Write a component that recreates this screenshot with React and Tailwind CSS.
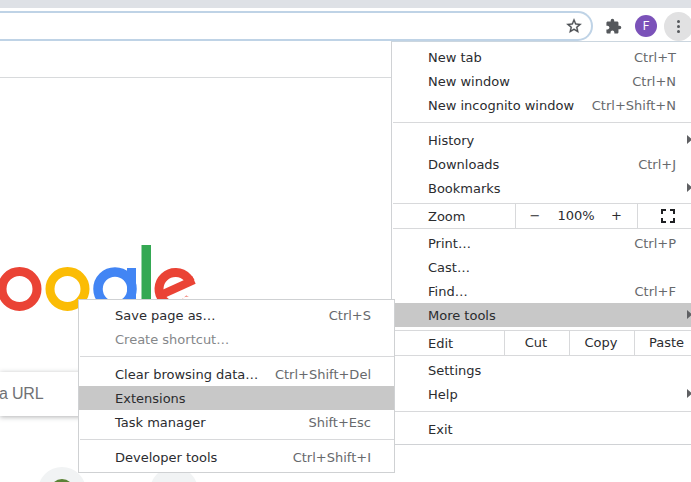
import React from "react";

function Row({ label, keys, arrow, active, muted, sub }) {
  return (
    <div
      className={`relative flex h-6 shrink-0 items-center ${sub ? "pr-[23px] pl-9" : "pr-[15px] pl-9"} ${active ? "bg-[#c8c8c8]" : ""} ${muted ? "text-[#85878a]" : "text-[#2b2c2f]"}`}
    >
      <span className="grow">{label}</span>
      {keys && <span className="text-[#67696c]">{keys}</span>}
      {arrow && (
        <svg className="absolute top-[7px] right-0 h-[9px] w-1" viewBox="0 0 4 9">
          <polygon points="0,0 5,4.5 0,9" fill="#5f6063" />
        </svg>
      )}
    </div>
  );
}

function Divider() {
  return <div className="mt-[5px] mb-[5px] ml-px h-px shrink-0 bg-[#d8d9db]" />;
}

function Toolbar() {
  return (
    <div className="flex h-[33px] shrink-0 items-start pt-[3px]">
      <div className="flex h-[30px] w-[593px] shrink-0 items-center justify-end rounded-r-full border-2 border-l-0 border-[#bfd3e6] bg-white pr-[8px]">
        <svg className="h-[18px] w-[18px]" viewBox="0 0 24 24" fill="#4c4f53" stroke="#4c4f53" strokeWidth="0.4">
          <path d="M22 9.24l-7.19-.62L12 2 9.19 8.63 2 9.24l5.46 4.73L5.82 21 12 17.27 18.18 21l-1.63-7.03L22 9.24zM12 15.4l-3.76 2.27 1-4.28-3.32-2.88 4.38-.38L12 6.1l1.71 4.04 4.38.38-3.32 2.88 1 4.28L12 15.4z" />
        </svg>
      </div>
      <div className="flex h-[30px] items-center">
        <svg className="ml-3 h-[17px] w-[17px]" viewBox="0 0 24 24" fill="#55585c">
          <path d="M20.5 11H19V7c0-1.1-.9-2-2-2h-4V3.500a2.500 2.500 0 0 0-5 0V5H4c-1.100 0-1.990.9-1.990 2v3.800H3.500c1.490 0 2.700 1.210 2.700 2.700s-1.210 2.700-2.700 2.700H2V20c0 1.100.9 2 2 2h3.800v-1.500c0-1.490 1.210-2.700 2.700-2.700s2.700 1.210 2.700 2.700V22H17c1.100 0 2-.9 2-2v-4h1.500a2.500 2.500 0 0 0 0-5z" />
        </svg>
        <div className="ml-[13px] flex h-[22px] w-[22px] items-center justify-center rounded-full bg-[#7b52b9] font-[Roboto,sans-serif] text-[12px] text-white">
          F
        </div>
        <div className="ml-[7px] flex h-[29px] w-[29px] shrink-0 flex-col items-center justify-center gap-[2px] rounded-full bg-[#e1e1e2]">
          <i className="h-[3px] w-[3px] rounded-full bg-[#55585c]" />
          <i className="h-[3px] w-[3px] rounded-full bg-[#55585c]" />
          <i className="h-[3px] w-[3px] rounded-full bg-[#55585c]" />
        </div>
      </div>
    </div>
  );
}

function Logo() {
  return (
    <svg className="block h-[88px] w-[200px]" viewBox="0 0 200 88" fill="none" strokeWidth="9" aria-label="Google">
      <circle cx="19.500" cy="44" r="17.500" stroke="#ea4335" />
      <circle cx="67.500" cy="44" r="17.500" stroke="#fbbc05" />
      <circle cx="115" cy="44" r="17" stroke="#4285f4" strokeWidth="9.500" />
      <rect x="127" y="23" width="9" height="42" fill="#4285f4" />
      <rect x="141.500" width="9.500" height="66" fill="#34a853" />
      <circle
        cx="175.500"
        cy="44"
        r="16.500"
        stroke="#ea4335"
        pathLength="360"
        strokeDasharray="288 72"
        transform="rotate(47 175.500 44)"
      />
      <line x1="162" y1="49.500" x2="194" y2="35" stroke="#ea4335" strokeWidth="8" />
    </svg>
  );
}

function MainMenu() {
  return (
    <div className="absolute top-[41px] left-[391px] flex h-[404px] w-[300px] flex-col border-t border-b border-l border-[#d0d2d5] border-t-[#cbd6df] bg-white pt-[3px]">
      <Row label="New tab" keys="Ctrl+T" />
      <Row label="New window" keys="Ctrl+N" />
      <Row label="New incognito window" keys="Ctrl+Shift+N" />
      <Divider />
      <Row label="History" arrow />
      <Row label="Downloads" keys="Ctrl+J" />
      <Row label="Bookmarks" arrow />
      <div className="mt-[3px] mb-[2px] ml-px flex h-[26px] shrink-0 border-y border-[#d8d9db] text-[#2b2c2f]">
        <div className="flex w-[122px] items-center pt-px pl-[35px]">Zoom</div>
        <div className="flex w-[123px] items-center border-x border-[#d8d9db] pb-px">
          <span className="w-[38px] text-center">−</span>
          <span className="w-[44px] text-center">100%</span>
          <span className="w-[37px] text-center">+</span>
        </div>
        <div className="flex grow items-center justify-center pl-[7px]">
          <svg className="h-[14px] w-[14px]" viewBox="0 0 14 14" fill="none" stroke="#1f2023" strokeWidth="2">
            <path d="M1 5V1h4M9 1h4v4M13 9v4H9M5 13H1V9" />
          </svg>
        </div>
      </div>
      <Row label="Print…" keys="Ctrl+P" />
      <Row label="Cast…" />
      <Row label="Find…" keys="Ctrl+F" />
      <Row label="More tools" arrow active />
      <div className="mt-[3px] mb-[2px] flex h-[26px] shrink-0 border-y border-[#d8d9db] text-[#2b2c2f]">
        <div className="flex w-[112px] items-center pt-px pl-9">Edit</div>
        <div className="flex w-[65px] items-center justify-center border-l border-[#d8d9db] pr-[2px] pb-px">Cut</div>
        <div className="flex w-[65px] items-center justify-center border-l border-[#d8d9db] pr-[2px] pb-px">Copy</div>
        <div className="flex grow items-center border-l border-[#d8d9db] pb-px pl-[14px]">Paste</div>
      </div>
      <Row label="Settings" />
      <Row label="Help" arrow />
      <Divider />
      <Row label="Exit" />
    </div>
  );
}

function ToolsMenu() {
  return (
    <div className="absolute top-[299px] left-[78px] flex h-[174px] w-[317px] flex-col border border-[#cfd1d3] bg-white pt-[3px]">
      <Row sub label="Save page as…" keys="Ctrl+S" />
      <Row sub label="Create shortcut…" muted />
      <Divider />
      <Row sub label="Clear browsing data…" keys="Ctrl+Shift+Del" />
      <Row sub label="Extensions" active />
      <Row sub label="Task manager" keys="Shift+Esc" />
      <Divider />
      <Row sub label="Developer tools" keys="Ctrl+Shift+I" />
    </div>
  );
}

export default function App() {
  return (
    <div className="relative flex h-[482px] w-[691px] flex-col overflow-hidden bg-white font-['DejaVu_Sans',sans-serif] text-[13px] leading-none whitespace-nowrap">
      <div className="h-2 shrink-0 bg-[#dee1e6]" />
      <Toolbar />
      <div className="h-[37px] shrink-0 border-b border-[#d8dadc]" />
      <div className="flex grow flex-col pt-[167px]">
        <Logo />
        <div className="mt-[39px] flex h-[44px] w-[370px] shrink-0 items-center bg-white font-['Liberation_Sans',sans-serif] text-[16px] text-[#707275] shadow-[0_1px_5px_rgba(32,33,36,0.35)]">
          <span className="-ml-px tracking-[-0.2px]">a URL</span>
        </div>
        <div className="mt-[51px] ml-[38px] flex shrink-0 gap-16">
          <div className="flex h-12 w-12 items-center justify-center rounded-full bg-[#f1f3f4]">
            <div className="h-6 w-6 rounded-full bg-[#5b8236]" />
          </div>
          <div className="h-12 w-12 rounded-full bg-[#f1f3f4]" />
        </div>
      </div>
      <MainMenu />
      <ToolsMenu />
    </div>
  );
}
